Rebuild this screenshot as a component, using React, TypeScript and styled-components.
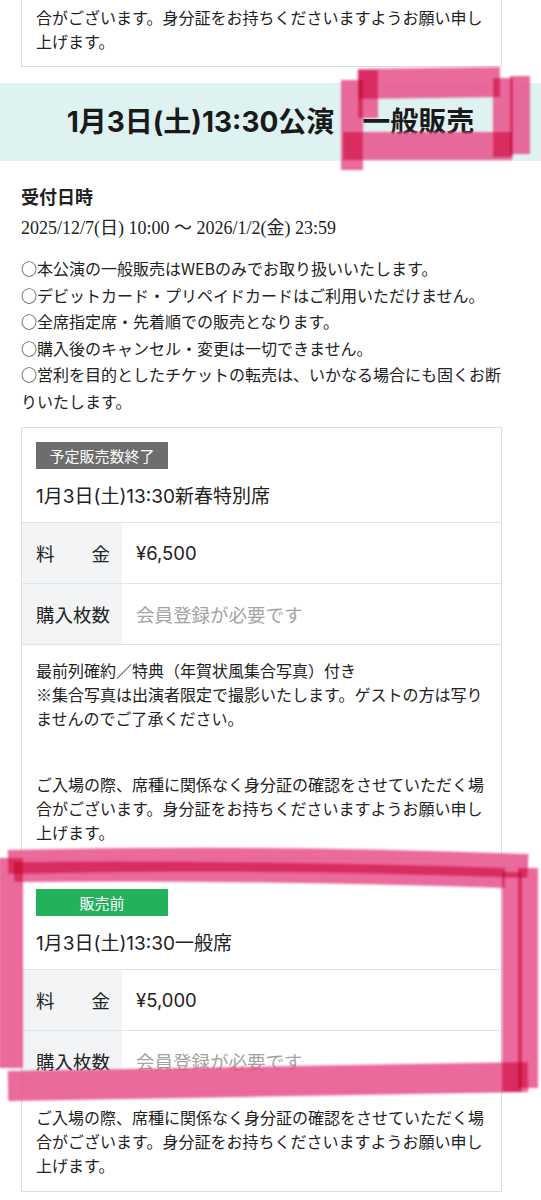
import React from "react";
import styled, { createGlobalStyle } from "styled-components";

const GlobalStyle = createGlobalStyle`
  html, body { margin: 0; padding: 0; background: #ffffff; }
  body {
    font-family: "Noto Sans CJK JP", "Noto Sans", sans-serif;
    color: #222222;
  }
  * { box-sizing: border-box; }
`;

const LATIN_JP = `"Inter", "Noto Sans CJK JP", sans-serif`;

const Page = styled.div`
  position: relative;
  width: 541px;
  height: 1200px;
  overflow: hidden;
  padding: 0 39px 0 21px;
`;

const Card = styled.section<{ $cut?: boolean; $gap?: number }>`
  border: 1px solid #dcdfe2;
  border-top: ${(p) => (p.$cut ? "none" : "1px solid #dcdfe2")};
  margin-top: ${(p) => p.$gap ?? 0}px;
  background: #ffffff;
`;

const Band = styled.div`
  margin: 16px -39px 0 -21px;
  height: 78px;
  background: #dff2f2;
  display: flex;
  align-items: center;
  justify-content: center;
`;

const BandTitle = styled.h2`
  margin: 0;
  font-family: ${LATIN_JP};
  font-size: 28px;
  font-weight: 700;
  line-height: 1;
  color: #1a1a1a;
  white-space: nowrap;
`;

const SectionLabel = styled.h3`
  margin: 22px 0 0;
  font-size: 18px;
  font-weight: 700;
  line-height: 26px;
  color: #222;
`;

const DateLine = styled.p`
  margin: 7px 0 0;
  font-family: "Liberation Serif", "Noto Sans CJK JP", serif;
  font-size: 18px;
  line-height: 24px;
  color: #222;
`;

const Notes = styled.ul`
  list-style: none;
  margin: 15px 0 0;
  padding: 0;
`;

const Note = styled.li`
  font-size: 16px;
  line-height: 26.6px;
  color: #222;
`;

const Head = styled.div`
  padding: 14px 14px 11px;
`;

const Badge = styled.div<{ $tone: "gray" | "green" }>`
  width: 132px;
  height: 27px;
  display: flex;
  align-items: center;
  justify-content: center;
  background: ${(p) => (p.$tone === "gray" ? "#6d6d6d" : "#23b15c")};
  color: #ffffff;
  font-size: 15px;
  line-height: 1;
`;

const SeatTitle = styled.div`
  margin-top: 14px;
  font-family: ${LATIN_JP};
  font-size: 19px;
  line-height: 28px;
  color: #222;
`;

const Row = styled.div`
  display: grid;
  grid-template-columns: 100px 1fr;
  min-height: 61px;
  border-top: 1px solid #e1e4e7;
`;

const Label = styled.div`
  background: #f3f4f6;
  display: flex;
  align-items: center;
  padding: 0 14px;
  font-size: 18.5px;
  color: #222;
  white-space: nowrap;
`;

const Value = styled.div<{ $muted?: boolean }>`
  display: flex;
  align-items: center;
  padding: 0 14px;
  font-family: ${LATIN_JP};
  font-size: 18.5px;
  color: ${(p) => (p.$muted ? "#a3a3a3" : "#222")};
`;

const Body = styled.div<{ $cut?: boolean }>`
  border-top: ${(p) => (p.$cut ? "none" : "1px solid #e1e4e7")};
  padding: ${(p) => (p.$cut ? "5px 14px 13px" : "13px 14px 14px")};
`;

const Para = styled.p`
  margin: 0;
  font-size: 16px;
  line-height: 24px;
  color: #222;
  & + & {
    margin-top: 42px;
  }
`;

const Marker = styled.svg`
  position: absolute;
  top: 0;
  left: 0;
  width: 541px;
  height: 1200px;
  pointer-events: none;
`;

const Stroke = styled.path`
  fill: none;
  stroke: #e8508c;
  stroke-opacity: 0.86;
  stroke-linecap: butt;
  stroke-linejoin: round;
  mix-blend-mode: multiply;
`;

const ID_NOTE =
  "ご入場の際、席種に関係なく身分証の確認をさせていただく場合がございます。身分証をお持ちくださいますようお願い申し上げます。";

type Seat = {
  badge: string;
  tone: "gray" | "green";
  title: string;
  price: string;
  extra?: string[];
};

const seats: Seat[] = [
  {
    badge: "予定販売数終了",
    tone: "gray",
    title: "1月3日(土)13:30新春特別席",
    price: "¥6,500",
    extra: [
      "最前列確約／特典（年賀状風集合写真）付き",
      "※集合写真は出演者限定で撮影いたします。ゲストの方は写りませんのでご了承ください。",
    ],
  },
  {
    badge: "販売前",
    tone: "green",
    title: "1月3日(土)13:30一般席",
    price: "¥5,000",
  },
];

const notes = [
  "○本公演の一般販売はWEBのみでお取り扱いいたします。",
  "○デビットカード・プリペイドカードはご利用いただけません。",
  "○全席指定席・先着順での販売となります。",
  "○購入後のキャンセル・変更は一切できません。",
  "○営利を目的としたチケットの転売は、いかなる場合にも固くお断りいたします。",
];

function SeatCard({ seat, gap }: { seat: Seat; gap: number }) {
  return (
    <Card $gap={gap}>
      <Head>
        <Badge $tone={seat.tone}>{seat.badge}</Badge>
        <SeatTitle>{seat.title}</SeatTitle>
      </Head>
      <Row>
        <Label>料　　金</Label>
        <Value>{seat.price}</Value>
      </Row>
      <Row>
        <Label>購入枚数</Label>
        <Value $muted>会員登録が必要です</Value>
      </Row>
      <Body>
        {seat.extra && (
          <Para>
            {seat.extra[0]}
            <br />
            {seat.extra[1]}
          </Para>
        )}
        <Para>{ID_NOTE}</Para>
      </Body>
    </Card>
  );
}

export default function App() {
  return (
    <>
      <GlobalStyle />
      <Page>
        <Card $cut>
          <Body $cut>
            <Para>合がございます。身分証をお持ちくださいますようお願い申し上げます。</Para>
          </Body>
        </Card>

        <Band>
          <BandTitle>1月3日(土)13:30公演　一般販売</BandTitle>
        </Band>

        <SectionLabel>受付日時</SectionLabel>
        <DateLine>2025/12/7(日) 10:00 ～ 2026/1/2(金) 23:59</DateLine>

        <Notes>
          {notes.map((n) => (
            <Note key={n}>{n}</Note>
          ))}
        </Notes>

        <SeatCard seat={seats[0]} gap={12} />
        <SeatCard seat={seats[1]} gap={15} />

        <Marker viewBox="0 0 541 1200">
          <defs>
            <filter id="soft" x="-5%" y="-5%" width="110%" height="110%">
              <feGaussianBlur stdDeviation="0.8" />
            </filter>
          </defs>
          <g filter="url(#soft)">
            {/* highlight around 一般販売 */}
            <Stroke d="M358 84 L500 82" strokeWidth={30} />
            <Stroke d="M352 80 L352 170" strokeWidth={22} />
            <Stroke d="M368 70 L368 118" strokeWidth={20} />
            <Stroke d="M503 78 L503 157" strokeWidth={20} />
            <Stroke d="M520 76 L520 154" strokeWidth={20} />
            <Stroke d="M343 146 L512 146" strokeWidth={28} />
            {/* highlight around 一般席 card */}
            <Stroke d="M8 862 Q270 856 528 866" strokeWidth={24} />
            <Stroke d="M14 872 Q270 870 505 878" strokeWidth={20} />
            <Stroke d="M11 858 L11 1068" strokeWidth={24} />
            <Stroke d="M512 872 L512 1092" strokeWidth={20} />
            <Stroke d="M528 868 L528 1088" strokeWidth={20} />
            <Stroke d="M8 1086 Q270 1082 528 1077" strokeWidth={30} />
          </g>
        </Marker>
      </Page>
    </>
  );
}
